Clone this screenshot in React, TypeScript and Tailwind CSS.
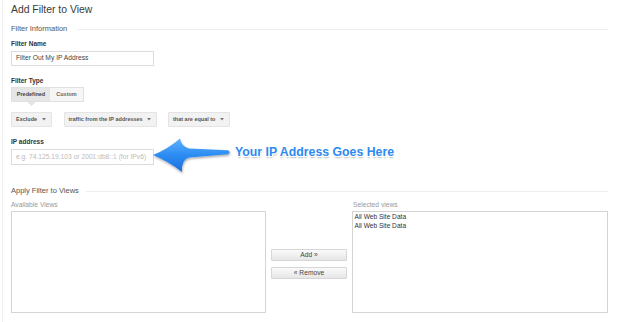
import React from "react";

const Caret = () => (
  <svg width="4" height="3" viewBox="0 0 4 3" className="shrink-0">
    <path d="M0 0 L4 0 L2 2.5 Z" fill="#777" />
  </svg>
);

function Dropdown({ label, w }: { label: string; w: string }) {
  return (
    <div
      className={`${w} h-[15px] bg-[#f2f2f2] border border-[#e4e4e4] rounded-[1px] flex items-center justify-between pl-[4px] pr-[5px] text-[5.5px] font-bold text-[#555]`}
    >
      <span>{label}</span>
      <Caret />
    </div>
  );
}

export default function App() {
  return (
    <div className="relative w-[619px] h-[322px] bg-white overflow-hidden pl-[2px] font-['Liberation_Sans',Arial,sans-serif]">
      <div className="h-full border-l border-[#efefef] pl-[8px] pr-[11px] flex flex-col">
        <div className="mt-[4px] text-[10.4px] leading-[12px] text-[#3a3a3a]">Add Filter to View</div>

        <div className="mt-[8px] h-[10px] flex items-center">
          <span className="text-[7.5px] leading-[10px] text-[#555] whitespace-nowrap">Filter Information</span>
          <div className="ml-[10px] flex-1 h-px bg-[#eeeeee]" />
        </div>

        <div className="mt-[6px] text-[6.5px] leading-[8px] font-bold text-[#333]">Filter Name</div>
        <div className="mt-[3px] w-[143px] h-[15px] border border-[#dcdcdc] pl-[4px] flex items-center text-[6.7px] text-[#444]">
          Filter Out My IP Address
        </div>

        <div className="mt-[11px] text-[6.5px] leading-[8px] font-bold text-[#333]">Filter Type</div>
        <div className="mt-[2px] relative flex h-[15px] w-[73px] border border-[#e0e0e0] text-[5.5px] font-bold">
          <div className="w-[38px] h-full bg-[#e6e6e6] flex items-center justify-center text-[#444]">Predefined</div>
          <div className="flex-1 h-full bg-[#f6f6f6] flex items-center justify-center text-[#666]">Custom</div>
          <svg className="absolute left-[16px] top-[14px]" width="7" height="4" viewBox="0 0 7 4">
            <path d="M0 0 L7 0 L3.5 3.5 Z" fill="#e6e6e6" />
            <path d="M0 0 L3.5 3.5 L7 0" fill="none" stroke="#d8d8d8" strokeWidth="0.8" />
          </svg>
        </div>

        <div className="mt-[10px] flex gap-[11.5px]">
          <Dropdown label="Exclude" w="w-[41px]" />
          <Dropdown label="traffic from the IP addresses" w="w-[93px]" />
          <Dropdown label="that are equal to" w="w-[62px]" />
        </div>

        <div className="mt-[11px] text-[6.5px] leading-[8px] font-bold text-[#333]">IP address</div>
        <div className="mt-[3px] w-[143px] h-[16px] border border-[#dcdcdc] pl-[4px] flex items-center text-[6.7px] text-[#bbbbbb] whitespace-nowrap">
          e.g. 74.125.19.103 or 2001:db8::1 (for IPv6)
        </div>

        <div className="mt-[21.4px] h-[10px] flex items-center">
          <span className="text-[7.5px] leading-[10px] text-[#555] whitespace-nowrap">Apply Filter to Views</span>
          <div className="ml-[7px] flex-1 h-px bg-[#eeeeee]" />
        </div>

        <div className="mt-[5px] flex">
          <div className="w-[255px] text-[6.7px] leading-[8px] text-[#999]">Available Views</div>
          <div className="w-[86px]" />
          <div className="pl-[1px] text-[6.7px] leading-[8px] text-[#999]">Selected views</div>
        </div>

        <div className="mt-[2px] flex h-[102px] gap-[5px]">
          <div className="w-[255px] h-full border border-[#d4d4d4]" />
          <div className="w-[76px] flex flex-col pt-[37.5px] gap-[6.5px]">
            <div className="h-[12px] border border-[#d6d6d6] rounded-[1px] bg-gradient-to-b from-[#fafafa] to-[#e6e6e6] flex items-center justify-center text-[6.7px] text-[#444]">
              Add »
            </div>
            <div className="h-[12px] border border-[#d6d6d6] rounded-[1px] bg-gradient-to-b from-[#fafafa] to-[#e6e6e6] flex items-center justify-center text-[6.7px] text-[#444]">
              « Remove
            </div>
          </div>
          <div className="flex-1 h-full border border-[#d4d4d4] pl-[1.5px] text-[6.6px] leading-[9px] text-[#333]">
            <div>All Web Site Data</div>
            <div>All Web Site Data</div>
          </div>
        </div>
      </div>

      <svg className="absolute left-0 top-0 pointer-events-none" width="619" height="322" viewBox="0 0 619 322">
        <defs>
          <linearGradient id="ag" x1="0" y1="0" x2="0" y2="1">
            <stop offset="0" stopColor="#5fb0ff" />
            <stop offset="0.5" stopColor="#2b8cf2" />
            <stop offset="1" stopColor="#1b6fdc" />
          </linearGradient>
          <filter id="sh" x="-20%" y="-30%" width="140%" height="160%">
            <feDropShadow dx="0.5" dy="1.5" stdDeviation="1.2" floodColor="#000" floodOpacity="0.35" />
          </filter>
        </defs>
        <path
          d="M153,155 Q168,149 180,138.5 Q181,146 189,148.5 L228,150.2 Q231.5,152.2 228,154.2 L189,157.5 Q181,160 182,172 Q168,161 153,155 Z"
          fill="url(#ag)"
          filter="url(#sh)"
        />
      </svg>

      <div
        className="absolute left-[235px] top-[146px] text-[12.3px] leading-[12px] font-bold text-[#2d89f0] whitespace-nowrap"
        style={{
          textShadow:
            "1px 0 0 #fff, -1px 0 0 #fff, 0 1px 0 #fff, 0 -1px 0 #fff, 1px 1px 0 #fff, -1px -1px 0 #fff, 1px -1px 0 #fff, -1px 1px 0 #fff, 0.5px 2px 1.5px rgba(0,0,0,0.3)",
        }}
      >
        Your IP Address Goes Here
      </div>
    </div>
  );
}
